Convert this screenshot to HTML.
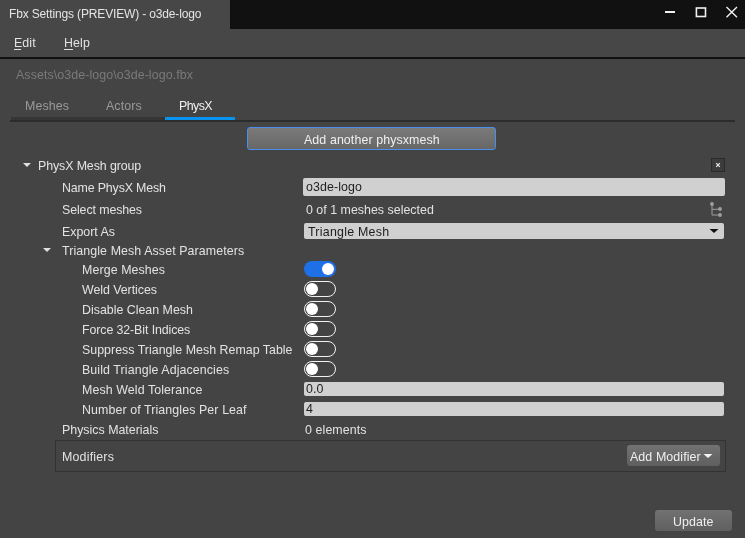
<!DOCTYPE html>
<html><head><meta charset="utf-8">
<style>
*{margin:0;padding:0;box-sizing:border-box}
html,body{-webkit-font-smoothing:antialiased;width:745px;height:538px;overflow:hidden;background:#444444;font-family:"Liberation Sans",sans-serif;position:relative}
.a{position:absolute}
.t{position:absolute;will-change:transform;white-space:nowrap;line-height:1;font-size:12.4px;color:#e2e2e2;letter-spacing:0.1px}
.titlebar{left:0;top:0;width:745px;height:29px;background:#111111}
.titleleft{left:0;top:0;width:230px;height:29px;background:#474747}
.menubar{left:0;top:29px;width:745px;height:28px;background:#474747}
.menuline{left:0;top:57px;width:745px;height:2px;background:#111111}
.ul{position:absolute;height:1px;background:#e0e0e0}
.track{left:11px;top:117px;width:224px;height:3px;background:#363636}
.thin{left:10px;top:120px;width:725px;height:2px;background:#2c2c2c}
.blue{left:165px;top:117px;width:70px;height:3px;background:#0893ee}
.btn1{left:247px;top:127px;width:249px;height:23px;border:1px solid #4b8fee;border-radius:3px;background:linear-gradient(#7a7a7a,#676767)}
.inp{position:absolute;background:#d0d0d0;border-radius:2px}
.it{color:#1e1e1e}
.tog{position:absolute;width:32px;height:16px;border-radius:8px}
.on{background:#1f6fe6}
.off{border:1.5px solid #f2f2f2}
.knob{position:absolute;width:12px;height:12px;border-radius:6px;background:#fff}
.closebox{left:711px;top:158px;width:14px;height:14px;border:1px solid #2a2a2a;background:#3c3c3c}
.modbox{left:55px;top:440px;width:671px;height:32px;border:1px solid #333333}
.btn2{left:627px;top:445px;width:93px;height:21px;border-radius:3px;background:linear-gradient(#727272,#5f5f5f)}
.btn3{left:655px;top:510px;width:77px;height:21px;border-radius:3px;background:linear-gradient(#727272,#5f5f5f)}
</style></head><body>
<div class="a titlebar"></div>
<div class="a titleleft"></div>
<div class="t" style="left:9px;top:7.6px;font-size:12px;color:#e4e4e4;letter-spacing:-0.15px">Fbx Settings (PREVIEW) - o3de-logo</div>
<!-- window controls -->
<svg class="a" style="left:650px;top:0" width="95" height="29" viewBox="0 0 95 29">
  <rect x="15" y="11" width="10" height="2" fill="#f0f0f0"/>
  <rect x="46.4" y="8" width="9.1" height="8.5" fill="none" stroke="#f0f0f0" stroke-width="1.6"/>
  <path d="M76.5 7 L87 17.2 M87 7 L76.5 17.2" stroke="#f0f0f0" stroke-width="1.4"/>
</svg>
<div class="a menubar"></div>
<div class="a menuline"></div>
<div class="t" style="left:14px;top:37.3px">Edit</div>
<div class="ul" style="left:14px;top:49px;width:7px"></div>
<div class="t" style="left:64px;top:37.3px">Help</div>
<div class="ul" style="left:64px;top:49px;width:9px"></div>

<div class="t" style="left:16px;top:69.3px;color:#7a7a7a;letter-spacing:0.09px">Assets\o3de-logo\o3de-logo.fbx</div>

<div class="t" style="left:25px;top:99.5px;color:#9a9a9a">Meshes</div>
<div class="t" style="left:106px;top:99.5px;color:#9a9a9a">Actors</div>
<div class="t" style="left:179px;top:99.5px;color:#f0f0f0;letter-spacing:-0.55px">PhysX</div>
<div class="a track"></div>
<div class="a thin"></div>
<div class="a blue"></div>

<div class="a btn1"></div>
<div class="t" style="left:304px;top:134px;color:#f0f0f0">Add another physxmesh</div>

<!-- group header -->
<svg class="a" style="left:23px;top:163px" width="9" height="5"><path d="M0 0H8L4 4Z" fill="#e0e0e0"/></svg>
<div class="t" style="left:38px;top:159.5px;letter-spacing:-0.1px">PhysX Mesh group</div>
<div class="a closebox"></div>
<svg class="a" style="left:711px;top:158px" width="14" height="14"><path d="M5.2 5.2L8.8 8.8M8.8 5.2L5.2 8.8" stroke="#f0f0f0" stroke-width="1.1"/></svg>

<div class="t" style="left:62px;top:181.7px;letter-spacing:-0.15px">Name PhysX Mesh</div>
<div class="inp" style="left:303px;top:178px;width:422px;height:18px"></div>
<div class="t it" style="left:306px;top:180.5px">o3de-logo</div>

<div class="t" style="left:62px;top:203.5px;letter-spacing:-0.1px">Select meshes</div>
<div class="t" style="left:306px;top:203.5px;letter-spacing:0.02px">0 of 1 meshes selected</div>
<svg class="a" style="left:705.8px;top:200px" width="20" height="20" viewBox="0 0 20 20">
  <path d="M6 4V15H14M6 9.3H14" fill="none" stroke="#a0a0a0" stroke-width="1"/>
  <circle cx="6" cy="4" r="1.9" fill="#a0a0a0"/><circle cx="14" cy="9" r="1.9" fill="#a0a0a0"/><circle cx="14" cy="15" r="1.9" fill="#a0a0a0"/>
</svg>

<div class="t" style="left:62px;top:225.5px;letter-spacing:0">Export As</div>
<div class="inp" style="left:304px;top:223px;width:420px;height:16px"></div>
<div class="t it" style="left:308px;top:225.5px;letter-spacing:0.25px">Triangle Mesh</div>
<svg class="a" style="left:709px;top:228px" width="10" height="6"><path d="M0.5 1H9.5L5 5Z" fill="#111"/></svg>

<svg class="a" style="left:43px;top:248px" width="9" height="5"><path d="M0 0H8L4 4Z" fill="#e0e0e0"/></svg>
<div class="t" style="left:62px;top:244.5px">Triangle Mesh Asset Parameters</div>

<div class="t" style="left:82px;top:263.5px">Merge Meshes</div>
<div class="tog on" style="left:304px;top:261px"><div class="knob" style="left:18px;top:2px"></div></div>
<div class="t" style="left:82px;top:283.5px;letter-spacing:-0.05px">Weld Vertices</div>
<div class="tog off" style="left:304px;top:281px"><div class="knob" style="left:0.5px;top:0.5px"></div></div>
<div class="t" style="left:82px;top:303.5px;letter-spacing:0">Disable Clean Mesh</div>
<div class="tog off" style="left:304px;top:301px"><div class="knob" style="left:0.5px;top:0.5px"></div></div>
<div class="t" style="left:82px;top:323.5px;letter-spacing:-0.1px">Force 32-Bit Indices</div>
<div class="tog off" style="left:304px;top:321px"><div class="knob" style="left:0.5px;top:0.5px"></div></div>
<div class="t" style="left:82px;top:343.5px;letter-spacing:0.02px">Suppress Triangle Mesh Remap Table</div>
<div class="tog off" style="left:304px;top:341px"><div class="knob" style="left:0.5px;top:0.5px"></div></div>
<div class="t" style="left:82px;top:363.5px">Build Triangle Adjacencies</div>
<div class="tog off" style="left:304px;top:361px"><div class="knob" style="left:0.5px;top:0.5px"></div></div>
<div class="t" style="left:82px;top:383.5px">Mesh Weld Tolerance</div>
<div class="inp" style="left:304px;top:382px;width:420px;height:14px"></div>
<div class="t it" style="left:306px;top:383.2px">0.0</div>
<div class="t" style="left:82px;top:403.5px">Number of Triangles Per Leaf</div>
<div class="inp" style="left:304px;top:402px;width:420px;height:14px"></div>
<div class="t it" style="left:306px;top:403.2px">4</div>
<div class="t" style="left:62px;top:423.5px;letter-spacing:0">Physics Materials</div>
<div class="t" style="left:305px;top:423.5px">0 elements</div>

<div class="a modbox"></div>
<div class="t" style="left:62px;top:451.3px;letter-spacing:0.2px">Modifiers</div>
<div class="a btn2"></div>
<div class="t" style="left:630px;top:450.7px;color:#f0f0f0">Add Modifier</div>
<svg class="a" style="left:703px;top:453px" width="11" height="6"><path d="M0.5 1H9.5L5 5Z" fill="#f4f4f4"/></svg>

<div class="a btn3"></div>
<div class="t" style="left:673px;top:515.5px;color:#f0f0f0">Update</div>
</body></html>
